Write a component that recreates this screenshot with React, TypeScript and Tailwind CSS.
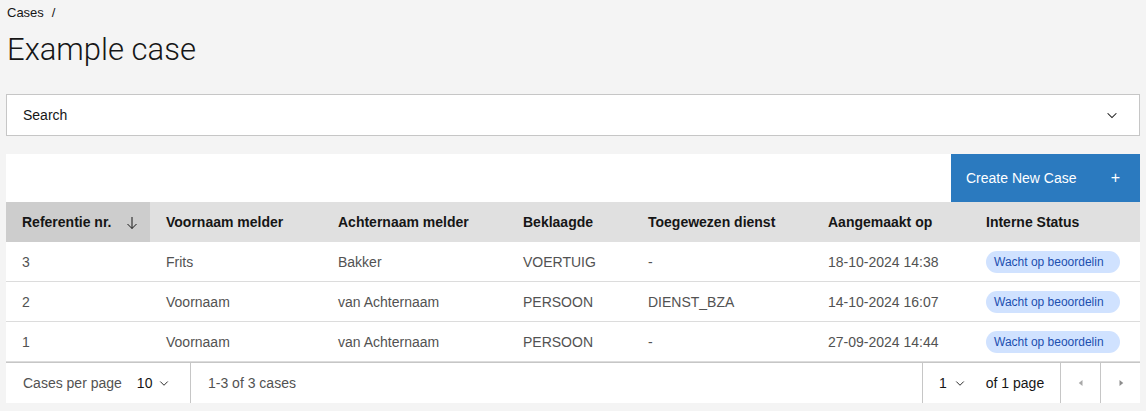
import React from "react";

const font = { fontFamily: '"Liberation Sans", Arial, sans-serif' };

const cols = "grid grid-cols-[144px_172px_185px_125px_180px_158px_1fr]";

const rows = [
  ["3", "Frits", "Bakker", "VOERTUIG", "-", "18-10-2024 14:38"],
  ["2", "Voornaam", "van Achternaam", "PERSOON", "DIENST_BZA", "14-10-2024 16:07"],
  ["1", "Voornaam", "van Achternaam", "PERSOON", "-", "27-09-2024 14:44"],
];

const headers = [
  "Voornaam melder",
  "Achternaam melder",
  "Beklaagde",
  "Toegewezen dienst",
  "Aangemaakt op",
  "Interne Status",
];

function ChevronDown({ className = "" }: { className?: string }) {
  return (
    <svg viewBox="0 0 16 16" className={className} fill="none" stroke="currentColor" strokeWidth="1.2">
      <path d="M3 6l5 5 5-5" />
    </svg>
  );
}

export default function App() {
  return (
    <div className="min-h-screen bg-[#f4f4f4] px-[6px] pt-[4px] text-[#161616]" style={font}>
      <div className="flex items-center gap-[8px] pl-[1px] text-[13px] leading-[18px] text-[#161616]">
        <span>Cases</span>
        <span>/</span>
      </div>
      <h1
        className="mt-[9px] pl-[1px] text-[31px] font-light leading-[38px] text-[#161616]"
        style={{ fontFamily: 'Roboto, "Liberation Sans", sans-serif' }}
      >
        Example case
      </h1>

      <div className="mt-[25px] flex h-[42px] items-center justify-between border border-[#c6c6c6] bg-white pl-[16px] pr-[20px] text-[14px]">
        <span>Search</span>
        <ChevronDown className="h-[14px] w-[14px] text-[#161616]" />
      </div>

      <div className="mt-[18px] bg-white">
        <div className="flex h-[48px] justify-end">
          <button className="flex w-[189px] items-center justify-between bg-[#2b7abf] pl-[15px] pr-[20px] text-[14px] text-white">
            <span>Create New Case</span>
            <span className="text-[16px] font-light">+</span>
          </button>
        </div>

        <div className={`${cols} h-[40px] bg-[#e0e0e0] text-[14px] font-semibold text-[#161616]`}>
          <div className="flex items-center justify-between bg-[#cdcdcd] pl-[16px] pr-[10px] pt-[1px]">
            <span>Referentie nr.</span>
            <svg viewBox="0 0 16 16" className="h-[16px] w-[16px]" fill="none" stroke="#161616" strokeWidth="1">
              <path d="M8 2v11.5M3.5 9l4.5 4.5 4.5-4.5" />
            </svg>
          </div>
          {headers.map((h) => (
            <div key={h} className="flex items-center pl-[16px] pt-[1px]">
              {h}
            </div>
          ))}
        </div>

        {rows.map((r, i) => (
          <div key={i} className={`${cols} h-[40px] border-b border-[#dcdcdc] text-[14px] text-[#525252]`}>
            {r.map((c, j) => (
              <div key={j} className="flex items-center pl-[16px] pt-[2px]">
                {c}
              </div>
            ))}
            <div className="flex items-center pl-[16px] pt-[1px]">
              <span className="flex h-[22px] w-[134px] items-center overflow-hidden whitespace-nowrap rounded-full bg-[#d0e2ff] pl-[8px] text-[12px] text-[#1c4fb0]">
                Wacht op beoordelin
              </span>
            </div>
          </div>
        ))}

        <div className="flex h-[41px] border-t border-[#c6c6c6] text-[14px]">
          <div className="flex w-[185px] items-center border-r border-[#c6c6c6] pl-[17px]">
            <span className="text-[#525252]">Cases per page</span>
            <span className="ml-[15px] text-[#161616]">10</span>
            <ChevronDown className="ml-[6px] h-[12px] w-[12px] text-[#161616]" />
          </div>
          <div className="flex flex-1 items-center pl-[17px] text-[#525252]">1-3 of 3 cases</div>
          <div className="flex w-[138px] items-center border-l border-[#c6c6c6] pl-[16px]">
            <span className="text-[#161616]">1</span>
            <ChevronDown className="ml-[7px] h-[12px] w-[12px] text-[#161616]" />
            <span className="ml-[20px] text-[#161616]">of 1 page</span>
          </div>
          <div className="flex w-[40px] items-center justify-center border-l border-[#c6c6c6]">
            <svg viewBox="0 0 16 16" className="h-[12px] w-[12px]" fill="#a8a8a8">
              <path d="M10 4v8L5 8z" />
            </svg>
          </div>
          <div className="flex w-[40px] items-center justify-center border-l border-[#c6c6c6]">
            <svg viewBox="0 0 16 16" className="h-[12px] w-[12px]" fill="#8d8d8d">
              <path d="M6 4v8l5-4z" />
            </svg>
          </div>
        </div>
      </div>
    </div>
  );
}
